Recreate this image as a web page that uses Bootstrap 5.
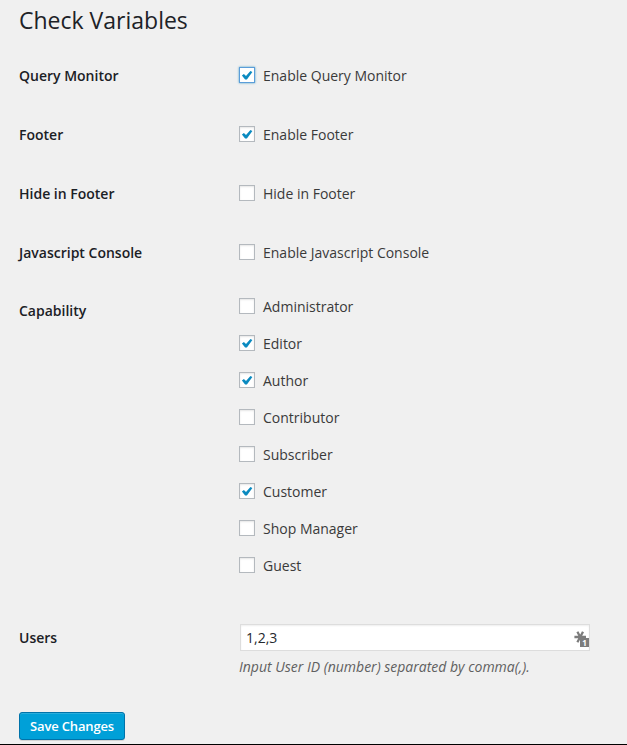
<!DOCTYPE html>
<html lang="en">
<head>
<meta charset="utf-8">
<meta name="viewport" content="width=device-width, initial-scale=1">
<title>Check Variables</title>
<link href="https://cdn.jsdelivr.net/npm/bootstrap@5.3.0/dist/css/bootstrap.min.css" rel="stylesheet">
<style>
body { background: #f0f0f0; color: #3a3a3a; font: 14px/20px "Open Sans", sans-serif; overflow: hidden; }
.settings-page { height: 745px; padding: 6px 19px 0; border-bottom: 1px solid #000; }
.page-title { font-size: 23px; font-weight: 400; line-height: 29px; color: #1d2227; margin: 0 0 11px; }
.setting { height: 59px; padding-top: 20px; }
.setting-name { width: 220px; flex: none; font-weight: 600; color: #1b2025; }
.setting-caps { height: 326px; padding-top: 15px; }
.setting-caps .setting-name { padding-top: 4px; }
.cap-list { gap: 17px; }
.setting-users { height: 104px; padding-top: 16px; }
.setting-users .setting-name { padding-top: 4px; }
.form-check.option { min-height: 20px; margin: 0; padding: 0; gap: 8px; }
.option .form-check-input { width: 16px; height: 16px; margin: 1px 0 0; float: none; flex: none; border: 1px solid #b4b9be; border-radius: 0; background-color: #fff; box-shadow: inset 0 1px 2px rgba(0,0,0,.1); }
.option .form-check-input:checked { background-size: 14px 14px; background-position: center; background-image: url("data:image/svg+xml,%3Csvg xmlns='http://www.w3.org/2000/svg' viewBox='0 0 14 14'%3E%3Cpath d='M1.9 7.4 3.9 5.9 6 8.1 10.4 2.9 12.4 4.1 6.9 11.6 5.1 11.6Z' fill='%230a8ac0'/%3E%3C/svg%3E"); }
.option .form-check-input.is-focused { border-color: #5b9dd9; box-shadow: 0 0 2px rgba(30,140,190,.8); }
.users-field { width: 350px; margin-left: 1px; }
.users-field .form-control { height: 27px; padding: 3px 5px; font-size: 14px; line-height: 19px; color: #25292e; border: 1px solid #ddd; border-radius: 0; box-shadow: inset 0 1px 2px rgba(0,0,0,.07); }
.field-badge { position: absolute; left: 334px; top: 7px; }
.hint { margin: 6px 0 0; color: #606060; font-style: italic; }
.btn.save { height: 28px; width: 106px; padding: 0; font-size: 13px; font-weight: 600; letter-spacing: -.17px; line-height: 26px; color: #fff; background: #00a0d8; border: 1px solid #0073aa; border-radius: 3px; box-shadow: inset 0 1px 0 rgba(120,200,230,.35), 0 1px 0 rgba(0,0,0,.12); }
</style>
<script src="https://cdn.jsdelivr.net/npm/bootstrap@5.3.0/dist/js/bootstrap.bundle.min.js"></script>
</head>
<body>
<form class="settings-page">
  <h1 class="page-title">Check Variables</h1>
  <div class="setting d-flex"><div class="setting-name">Query Monitor</div>
    <label class="form-check option d-flex"><input class="form-check-input is-focused" type="checkbox" checked>Enable Query Monitor</label></div>
  <div class="setting d-flex"><div class="setting-name">Footer</div>
    <label class="form-check option d-flex"><input class="form-check-input" type="checkbox" checked>Enable Footer</label></div>
  <div class="setting d-flex"><div class="setting-name">Hide in Footer</div>
    <label class="form-check option d-flex"><input class="form-check-input" type="checkbox">Hide in Footer</label></div>
  <div class="setting d-flex"><div class="setting-name">Javascript Console</div>
    <label class="form-check option d-flex"><input class="form-check-input" type="checkbox">Enable Javascript Console</label></div>
  <div class="setting-caps d-flex"><div class="setting-name">Capability</div>
    <div class="cap-list d-flex flex-column">
      <label class="form-check option d-flex"><input class="form-check-input" type="checkbox">Administrator</label>
      <label class="form-check option d-flex"><input class="form-check-input" type="checkbox" checked>Editor</label>
      <label class="form-check option d-flex"><input class="form-check-input" type="checkbox" checked>Author</label>
      <label class="form-check option d-flex"><input class="form-check-input" type="checkbox">Contributor</label>
      <label class="form-check option d-flex"><input class="form-check-input" type="checkbox">Subscriber</label>
      <label class="form-check option d-flex"><input class="form-check-input" type="checkbox" checked>Customer</label>
      <label class="form-check option d-flex"><input class="form-check-input" type="checkbox">Shop Manager</label>
      <label class="form-check option d-flex"><input class="form-check-input" type="checkbox">Guest</label>
    </div>
  </div>
  <div class="setting-users d-flex"><div class="setting-name">Users</div>
    <div>
      <div class="users-field position-relative">
        <input class="form-control" type="text" value="1,2,3" aria-label="Users">
        <svg class="field-badge" width="16" height="16" viewBox="0 0 16 16" aria-hidden="true">
          <path d="M0.4 6H12M3.4 .8 9 11.2M9 .8 3.4 11.2" stroke="#7c7c7c" stroke-width="2.3" fill="none"/>
          <rect x="6" y="7" width="9" height="9" fill="#7c7c7c"/>
          <text x="10.6" y="14.7" text-anchor="middle" font-family="Open Sans, sans-serif" font-size="8" font-weight="700" fill="#fff">1</text>
        </svg>
      </div>
      <p class="hint">Input User ID (number) separated by comma(,).</p>
    </div>
  </div>
  <button class="btn save d-block" type="button">Save Changes</button>
</form>
</body>
</html>
